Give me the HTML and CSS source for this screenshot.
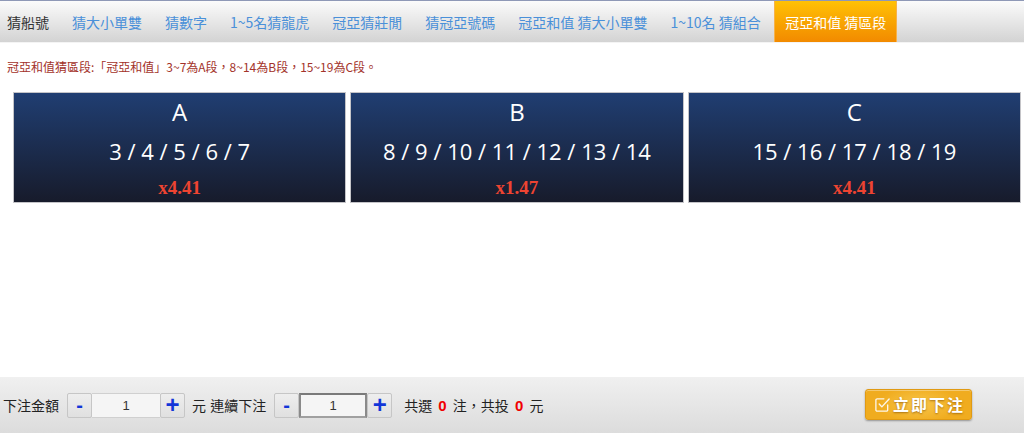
FILE: index.html
```html
<!DOCTYPE html>
<html lang="zh-Hant">
<head>
<meta charset="utf-8">
<title>冠亞和值 猜區段</title>
<link rel="stylesheet" href="styles.css">
</head>
<body>
<div class="page">
  <nav class="tabs">
    <a class="tab tab-first">猜船號</a>
    <a class="tab">猜大小單雙</a>
    <a class="tab">猜數字</a>
    <a class="tab">1~5名猜龍虎</a>
    <a class="tab">冠亞猜莊閒</a>
    <a class="tab">猜冠亞號碼</a>
    <a class="tab">冠亞和值 猜大小單雙</a>
    <a class="tab">1~10名 猜組合</a>
    <a class="tab tab-active">冠亞和值 猜區段</a>
  </nav>
  <main class="content">
    <p class="desc">冠亞和值猜區段:「冠亞和值」3~7為A段，8~14為B段，15~19為C段。</p>
    <div class="cards">
      <div class="card">
        <div class="card-letter">A</div>
        <div class="card-nums">3 / 4 / 5 / 6 / 7</div>
        <div class="card-odds">x4.41</div>
      </div>
      <div class="card">
        <div class="card-letter">B</div>
        <div class="card-nums">8 / 9 / 10 / 11 / 12 / 13 / 14</div>
        <div class="card-odds">x1.47</div>
      </div>
      <div class="card">
        <div class="card-letter">C</div>
        <div class="card-nums">15 / 16 / 17 / 18 / 19</div>
        <div class="card-odds">x4.41</div>
      </div>
    </div>
  </main>
  <footer class="betbar">
    <span class="label">下注金額</span>
    <div class="stepper">
      <button class="step step-minus">-</button>
      <input class="step-input" type="text" value="1">
      <button class="step step-plus">+</button>
    </div>
    <span class="label">元 連續下注</span>
    <div class="stepper">
      <button class="step step-minus">-</button>
      <input class="step-input step-input-focus" type="text" value="1">
      <button class="step step-plus">+</button>
    </div>
    <span class="label summary">共選 <b class="red">0</b> 注，共投 <b class="red">0</b> 元</span>
    <button class="submit">
      <svg class="submit-icon" viewBox="0 0 18 18" width="17" height="17" aria-hidden="true">
        <path d="M14.5 9.5v5.2a1.3 1.3 0 0 1-1.3 1.3H3.3A1.3 1.3 0 0 1 2 14.7V4.3A1.3 1.3 0 0 1 3.3 3h7.2" fill="none" stroke="#fff" stroke-width="1.4" stroke-linecap="round"/>
        <path d="M5.5 8.5l2.8 3L16 3.2" fill="none" stroke="#fff" stroke-width="1.5" stroke-linecap="round" stroke-linejoin="round"/>
      </svg>
      <span class="submit-text">立即下注</span>
    </button>
  </footer>
</div>
</body>
</html>
```
FILE: styles.css
```css
* { box-sizing: border-box; }
html, body { margin: 0; padding: 0; height: 100%; }
body {
  background: #fff;
  font-family: "Noto Sans CJK TC", "Noto Sans", sans-serif;
  font-size: 14px;
  color: #333;
}
.page {
  display: flex;
  flex-direction: column;
  height: 100vh;
}
.tabs {
  display: flex;
  align-items: stretch;
  height: 43px;
  border-top: 1px solid #8e98b6;
  border-bottom: 1px solid #f4f4f4;
  background: linear-gradient(#fbfbfb, #d3d3d3);
}
.tab {
  display: flex;
  align-items: center;
  padding: 0 11.5px;
  color: #4a90d9;
  font-size: 14px;
  white-space: nowrap;
  cursor: pointer;
}
.tab-first {
  padding-left: 7px;
  color: #333;
}
.tab-active {
  margin-left: 2px;
  padding: 0 10px;
  color: #fff;
  background: linear-gradient(#ffc105, #f28a00);
  border-left: 1px solid #f6b24a;
  border-right: 1px solid #f6b24a;
}
.content {
  flex: 1;
  padding: 0 3px 0 13px;
}
.desc {
  margin: 15px 0 16px -6px;
  font-size: 12px;
  line-height: 18px;
  color: #a3322a;
}
.cards {
  display: grid;
  grid-template-columns: repeat(3, 1fr);
  gap: 4px;
}
.card {
  height: 111px;
  border: 1px solid #c4c4c8;
  background: linear-gradient(#203e72, #171b2b);
  display: flex;
  flex-direction: column;
  align-items: center;
  color: #fff;
  font-family: "Open Sans", "Noto Sans", sans-serif;
}
.card-letter {
  margin-top: 2px;
  font-size: 24px;
  line-height: 34px;
}
.card-nums {
  margin-top: 7px;
  font-size: 22px;
  line-height: 30px;
}
.card-odds {
  margin-top: 10px;
  font-family: "Liberation Serif", serif;
  font-weight: bold;
  font-size: 19px;
  line-height: 24px;
  color: #ee4431;
}
.betbar {
  height: 56px;
  display: flex;
  align-items: center;
  padding: 0 0 0 3px;
  background: linear-gradient(#f0f0f0, #dcdcdc);
}
.label {
  font-size: 14px;
  color: #222;
  white-space: nowrap;
  word-spacing: 1px;
}
.stepper {
  display: flex;
  height: 25px;
  margin: 0 7px 0 8px;
}
.step {
  width: 25px;
  height: 25px;
  padding: 0;
  border: 1px solid #c6c6c6;
  border-radius: 2px;
  background: linear-gradient(#eeeeee, #e0e0e0);
  color: #1236d8;
  font-family: "Liberation Sans", sans-serif;
  font-weight: bold;
  line-height: 20px;
}
.step-minus { font-size: 20px; }
.step-plus { font-size: 24px; }
.step-input {
  width: 68px;
  height: 25px;
  border: 1px solid #d0d0d0;
  border-left: none;
  border-right: none;
  background: #f5f5f5;
  text-align: center;
  font-family: "Liberation Sans", sans-serif;
  font-size: 13px;
  color: #333;
  padding: 0;
  outline: none;
}
.step-input-focus {
  border: 2px solid #8a8a8a;
  border-top-color: #7a7a7a;
  border-bottom-color: #a0a0a0;
}
.summary {
  margin-left: 5px;
  word-spacing: 3px;
}
.red {
  color: #f00000;
  font-weight: bold;
  font-family: "Liberation Sans", sans-serif;
  font-size: 15px;
}
.submit {
  margin-left: auto;
  margin-right: 52px;
  margin-top: -2px;
  width: 107px;
  height: 31px;
  display: flex;
  align-items: center;
  justify-content: flex-start;
  gap: 2px;
  padding: 0 0 0 8px;
  border: 1px solid #e09a14;
  border-radius: 3px;
  background: radial-gradient(ellipse 55% 90% at 50% 50%, #f8c64a, #f0ac1f 70%);
  box-shadow: 0 1px 2px rgba(0,0,0,0.35), inset 0 1px 0 rgba(255,255,255,0.35);
  cursor: pointer;
}
.submit-icon { flex: none; opacity: 0.9; }
.submit-text {
  font-family: "Noto Sans CJK TC", sans-serif;
  font-weight: bold;
  font-size: 16px;
  letter-spacing: 2px;
  color: #fff;
  text-shadow: 0 1px 2px rgba(120,70,0,0.6);
}
```
